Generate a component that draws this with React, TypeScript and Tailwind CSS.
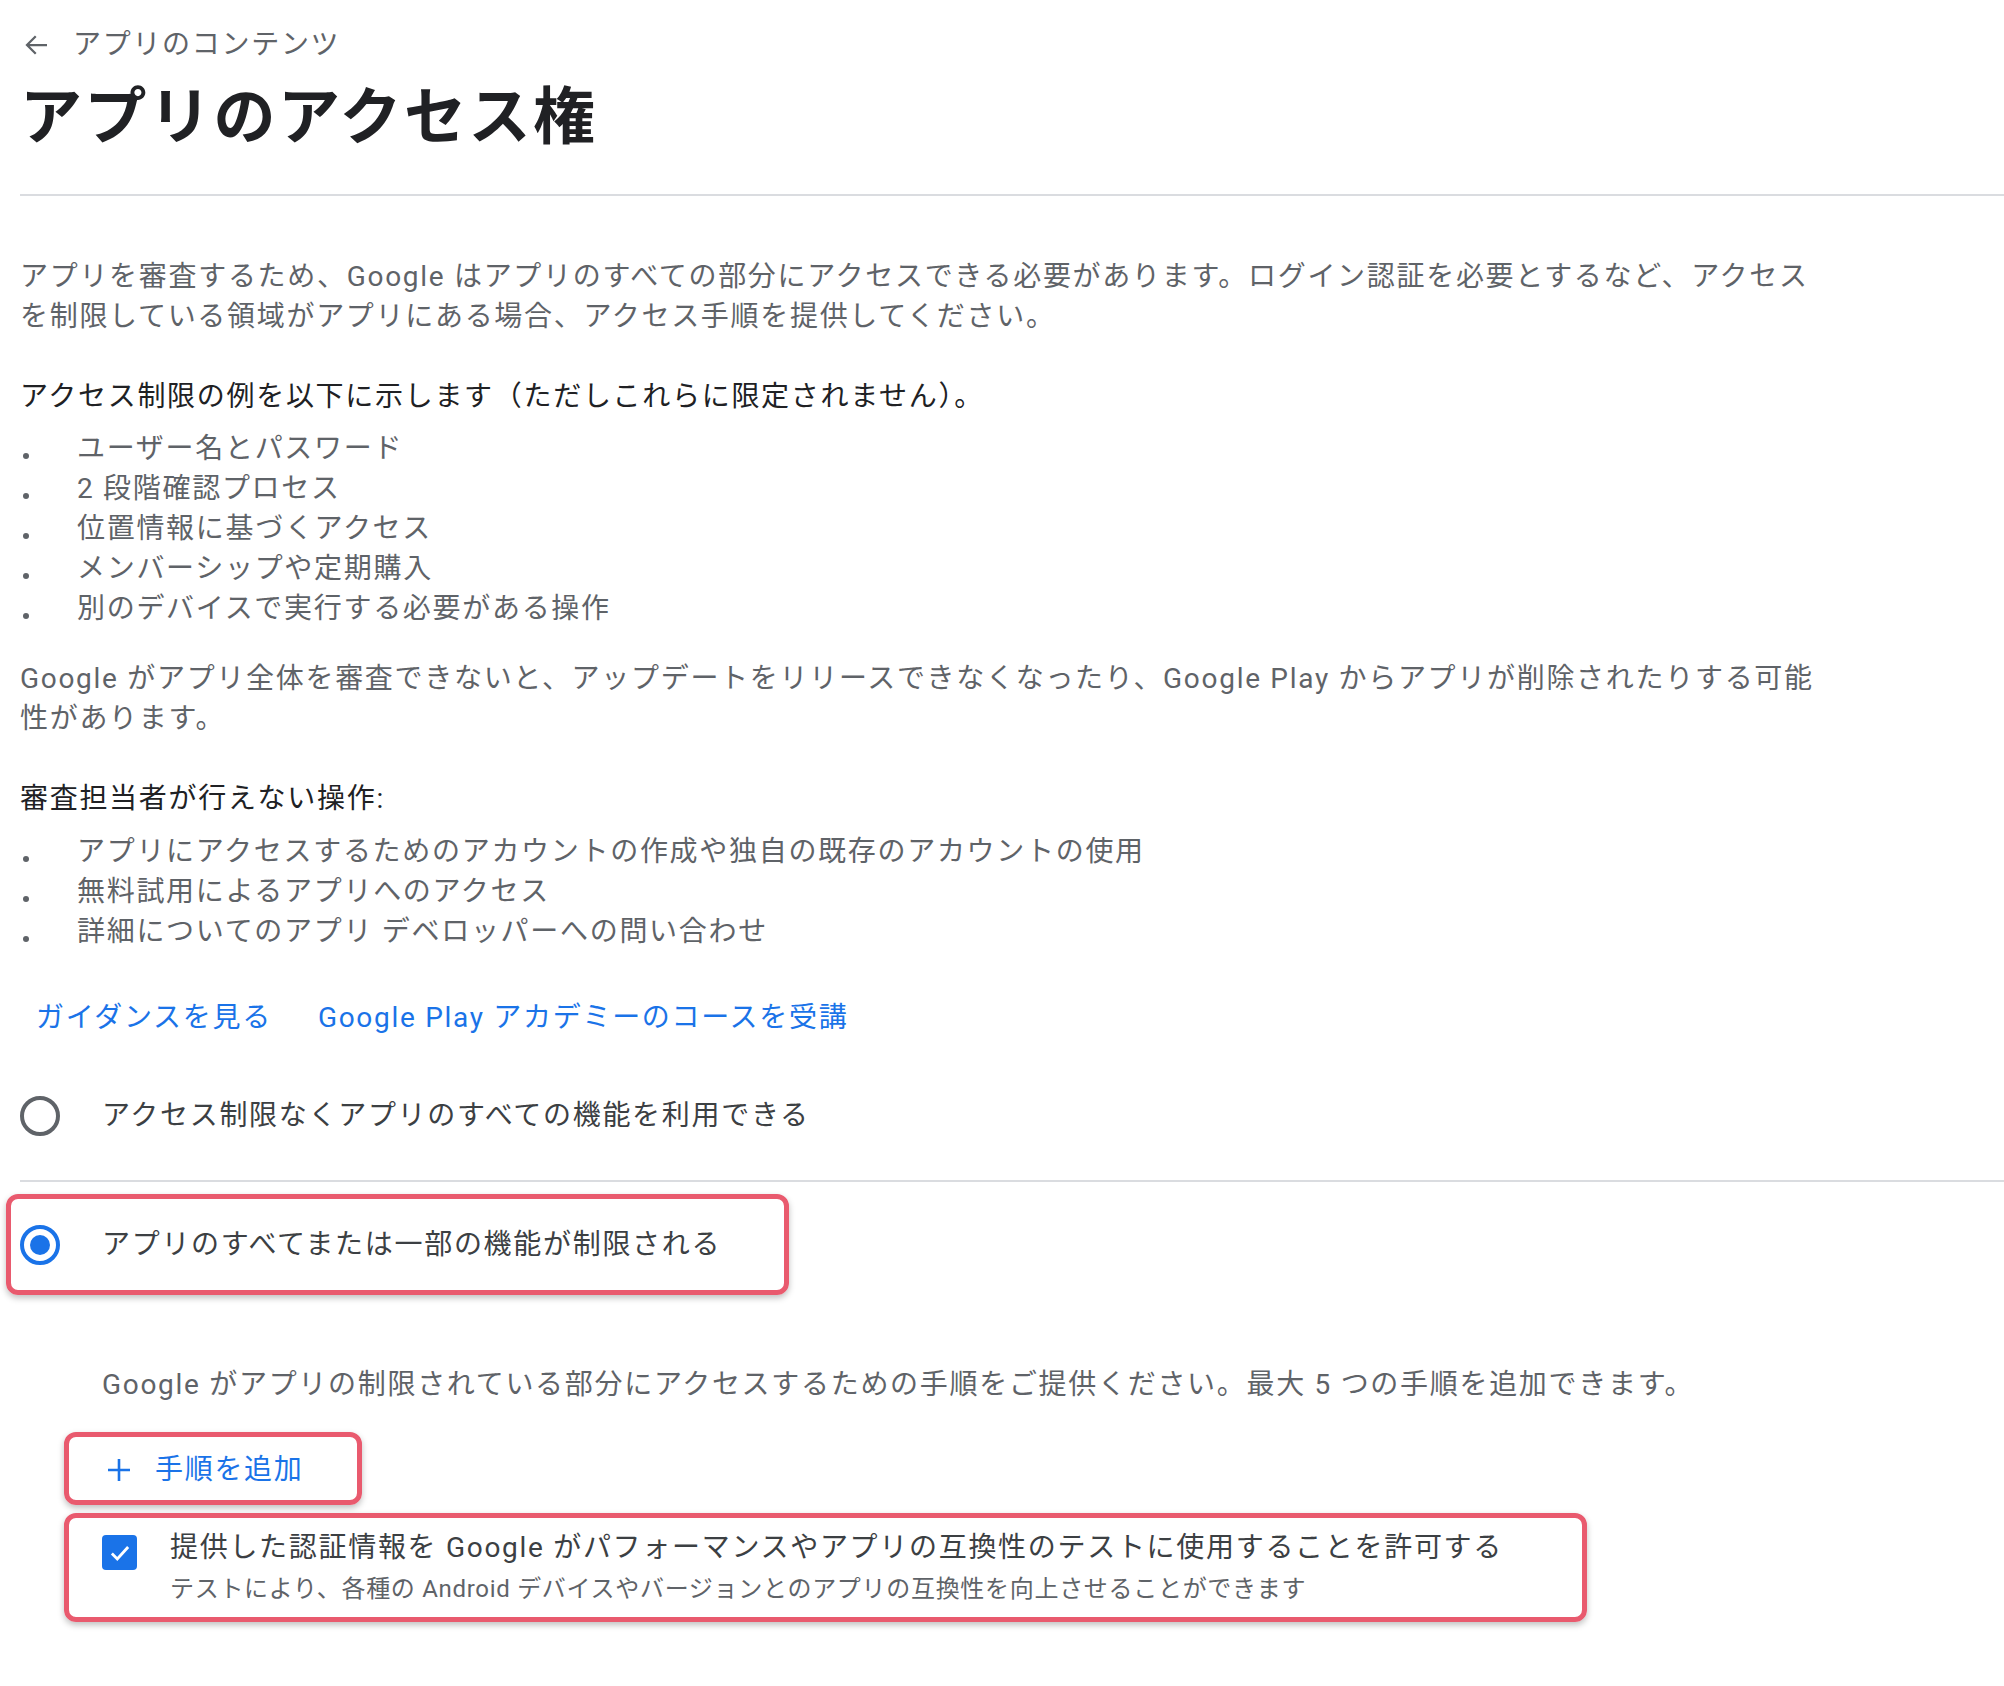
import React from 'react';

const font = 'font-[Roboto,"Noto_Sans_CJK_JP",sans-serif]';

const Bullet: React.FC<{ children: React.ReactNode }> = ({ children }) => (
  <li className="flex items-start h-[40px]">
    <span className="w-[6px] h-[6px] rounded-full bg-[#5f6368] mt-[24px] ml-[3px] shrink-0" />
    <span className="ml-[48px] whitespace-nowrap">{children}</span>
  </li>
);

const Radio: React.FC<{ checked?: boolean }> = ({ checked }) =>
  checked ? (
    <span className="w-[40px] h-[40px] rounded-full border-[4px] border-[#1a73e8] flex items-center justify-center shrink-0">
      <span className="w-[20px] h-[20px] rounded-full bg-[#1a73e8]" />
    </span>
  ) : (
    <span className="w-[40px] h-[40px] rounded-full border-[4px] border-[#5f6368] shrink-0" />
  );

const highlight = 'border-[5px] border-[#e95a6e] rounded-[12px] shadow-[0_3px_6px_rgba(0,0,0,0.25)]';

export default function App() {
  return (
    <div className={`${font} bg-white min-h-[1686px] w-[2004px] text-[28px] leading-[40px] tracking-[1.7px] text-[#5f6368] pl-[20px] pt-[25px]`}>
      {/* back link */}
      <div className="flex items-center h-[40px]">
        <svg width="30" height="30" viewBox="0 0 24 24" className="ml-[2px]">
          <path d="M20 12H5M11 5l-7 7 7 7" fill="none" stroke="#5f6368" strokeWidth="1.8" />
        </svg>
        <span className="ml-[21px]">アプリのコンテンツ</span>
      </div>

      <h1 className="mt-[17px] text-[62px] leading-[72px] tracking-[2.5px] font-bold text-[#202124]">アプリのアクセス権</h1>

      <div className="mt-[40px] h-[2px] bg-[#dadce0]" />

      <p className="mt-[61px] whitespace-nowrap">
        アプリを審査するため、Google はアプリのすべての部分にアクセスできる必要があります。ログイン認証を必要とするなど、アクセス
        <br />
        を制限している領域がアプリにある場合、アクセス手順を提供してください。
      </p>

      <p className="mt-[40px] text-[#202124]">アクセス制限の例を以下に示します（ただしこれらに限定されません）。</p>

      <ul className="mt-[12px]">
        <Bullet>ユーザー名とパスワード</Bullet>
        <Bullet>2 段階確認プロセス</Bullet>
        <Bullet>位置情報に基づくアクセス</Bullet>
        <Bullet>メンバーシップや定期購入</Bullet>
        <Bullet>別のデバイスで実行する必要がある操作</Bullet>
      </ul>

      <p className="mt-[30px] whitespace-nowrap">
        Google がアプリ全体を審査できないと、アップデートをリリースできなくなったり、Google Play からアプリが削除されたりする可能
        <br />
        性があります。
      </p>

      <p className="mt-[40px] text-[#202124]">審査担当者が行えない操作:</p>

      <ul className="mt-[13px]">
        <Bullet>アプリにアクセスするためのアカウントの作成や独自の既存のアカウントの使用</Bullet>
        <Bullet>無料試用によるアプリへのアクセス</Bullet>
        <Bullet>詳細についてのアプリ デベロッパーへの問い合わせ</Bullet>
      </ul>

      <div className="mt-[46px] flex gap-[46px] pl-[16px] text-[#1a73e8]">
        <a>ガイダンスを見る</a>
        <a>Google Play アカデミーのコースを受講</a>
      </div>

      <div className="mt-[58px] flex items-center h-[40px] text-[#3c4043]">
        <Radio />
        <span className="ml-[42px]">アクセス制限なくアプリのすべての機能を利用できる</span>
      </div>

      <div className="mt-[44px] h-[2px] bg-[#dadce0]" />

      <div className={`${highlight} mt-[12px] -ml-[14px] w-[783px] h-[101px] flex items-center pl-[9px] text-[#3c4043]`}>
        <Radio checked />
        <span className="ml-[42px]">アプリのすべてまたは一部の機能が制限される</span>
      </div>

      <p className="mt-[70px] pl-[82px] whitespace-nowrap">
        Google がアプリの制限されている部分にアクセスするための手順をご提供ください。最大 5 つの手順を追加できます。
      </p>

      <div className={`${highlight} mt-[27px] ml-[44px] w-[298px] h-[73px] flex items-center pl-[37px] pt-[3px] text-[#1a73e8]`}>
        <svg width="26" height="26" viewBox="0 0 26 26">
          <path d="M13 2v22M2 13h22" stroke="#1a73e8" strokeWidth="2.6" />
        </svg>
        <span className="ml-[23px]">手順を追加</span>
      </div>

      <div className={`${highlight} mt-[8px] ml-[44px] w-[1523px] h-[109px] flex items-start pl-[33px] pt-[10px]`}>
        <span className="mt-[7px] w-[35px] h-[35px] rounded-[4px] bg-[#1a73e8] flex items-center justify-center shrink-0">
          <svg width="26" height="26" viewBox="0 0 24 24">
            <path d="M4.5 12.5l5 5 10-11" fill="none" stroke="white" strokeWidth="2.6" />
          </svg>
        </span>
        <div className="ml-[33px]">
          <div className="text-[#3c4043] whitespace-nowrap">
            提供した認証情報を Google がパフォーマンスやアプリの互換性のテストに使用することを許可する
          </div>
          <div className="mt-[4px] text-[24px] leading-[34px] tracking-[0.7px] whitespace-nowrap">
            テストにより、各種の Android デバイスやバージョンとのアプリの互換性を向上させることができます
          </div>
        </div>
      </div>
    </div>
  );
}
